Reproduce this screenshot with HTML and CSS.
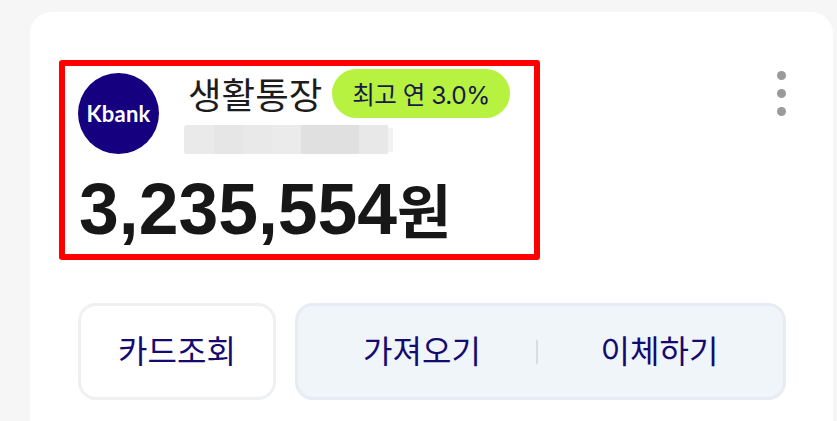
FILE: index.html
```html
<!DOCTYPE html>
<html lang="ko">
<head>
<meta charset="utf-8">
<title>생활통장</title>
<link rel="stylesheet" href="styles.css">
</head>
<body>
<main class="card">
  <div class="top">
    <section class="highlight">
      <div class="head">
        <div class="logo">Kbank</div>
        <div class="info">
          <div class="title-row">
            <span class="title">생활통장</span>
            <span class="badge">최고 연 3.0%</span>
          </div>
          <div class="masked">
            <span class="m m1"></span><span class="m m2"></span><span class="m m3"></span><span class="m m4"></span><span class="m m5"></span><span class="m m6"></span><span class="m m7"></span>
          </div>
        </div>
      </div>
      <div class="amount">3,235,554<span class="won">원</span></div>
    </section>
    <div class="more" aria-label="더보기"><i></i><i></i><i></i></div>
  </div>
  <div class="actions">
    <button class="btn card-btn">카드조회</button>
    <div class="group">
      <button class="btn btn-left">가져오기</button>
      <span class="divider"></span>
      <button class="btn btn-right">이체하기</button>
    </div>
  </div>
</main>
</body>
</html>
```
FILE: styles.css
```css
* { box-sizing: border-box; }
html, body { margin: 0; height: 421px; overflow: hidden; }
body {
  background: #f6f6f6;
  font-family: "Noto Sans CJK KR", Inter, sans-serif;
  padding: 12px 4px 0 30px;
}
.card {
  background: #fff;
  height: 409px;
  border-radius: 22px 22px 0 0;
  padding: 48px 47px 0 30px;
}
.top { display: flex; justify-content: space-between; align-items: flex-start; }
.highlight {
  width: 481px;
  height: 200px;
  margin-left: -1px;
  border: 6px solid #fe0000;
  border-radius: 3px;
  padding: 7px 0 0 13px;
}
.head { display: flex; }
.logo {
  width: 81px;
  height: 81px;
  border-radius: 50%;
  background: #150080;
  color: #fff;
  font-family: Lato, sans-serif;
  font-weight: 700;
  font-size: 22px;
  letter-spacing: .2px;
  display: flex;
  align-items: center;
  justify-content: center;
}
.info { margin-left: 26px; margin-top: -4px; }
.title-row { display: flex; align-items: center; height: 49px; margin-left: 5px; }
.title { font-size: 36.5px; color: #1c1c1c; line-height: 49px; width: 143px; margin-left: -2px; white-space: nowrap; }
.badge {
  width: 178px;
  height: 49px;
  margin-left: 1px;
  border-radius: 25px;
  background: #b6f23f;
  color: #18184a;
  font-family: Inter, "Noto Sans CJK KR", sans-serif;
  font-size: 24.5px;
  letter-spacing: -.5px;
  display: flex;
  align-items: center;
  justify-content: center;
  white-space: nowrap;
}
.masked { display: flex; align-items: center; height: 29px; margin-top: 7px; margin-left: -1px; }
.m { display: block; height: 29px; width: 29px; }
.m1 { width: 30px; background: #eaeaea; border-radius: 3px 0 0 3px; }
.m2 { background: #e6e6e6; }
.m3 { background: #e9e9e9; }
.m4 { background: #ebebeb; }
.m5 { width: 58px; background: #e0e0e0; }
.m6 { background: #e8e8e8; }
.m7 { width: 5px; height: 24px; background: #f2f2f2; }
.amount {
  font-family: "Liberation Sans", "Noto Sans CJK KR", sans-serif;
  font-weight: 700;
  font-size: 71.5px;
  line-height: 70px;
  color: #171717;
  margin-top: 20px;
  margin-left: 1px;
  white-space: nowrap;
}
.won { font-family: "Noto Sans CJK KR", sans-serif; font-size: 59px; }
.more { display: flex; flex-direction: column; gap: 9px; margin-top: 11px; }
.more i { display: block; width: 9px; height: 9px; border-radius: 50%; background: #9a9a9a; }
.actions { display: flex; gap: 19px; margin: 43px 0 0 18px; }
.btn {
  background: none;
  border: 0;
  font: inherit;
  font-size: 32px;
  color: #150a70;
  padding: 0 0 5px;
}
.card-btn {
  width: 198px;
  height: 97px;
  border: 3px solid #eef0f2;
  border-radius: 18px;
}
.group {
  flex: 1;
  height: 97px;
  display: flex;
  align-items: center;
  background: #f0f5fa;
  border: 3px solid #e6ecf1;
  border-radius: 18px;
}
.btn-left { width: 238px; padding-left: 10px; }
.btn-right { flex: 1; padding-right: 2px; }
.divider { width: 2px; height: 24px; background: #d9dde1; }
```
